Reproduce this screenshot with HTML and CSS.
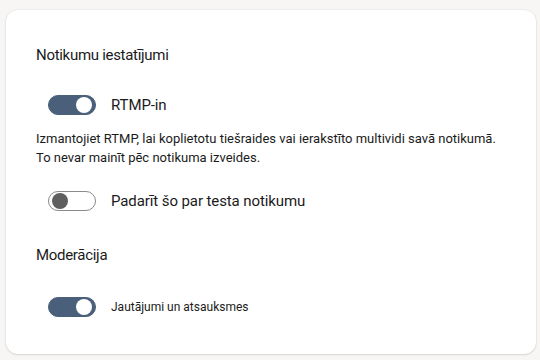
FILE: index.html
```html
<!DOCTYPE html>
<html lang="lv">
<head>
    <meta charset="UTF-8">
    <meta name="viewport" content="width=device-width, initial-scale=1.0">
    <title>Notikumu iestatījumi</title>
    <link rel="stylesheet" href="styles.css">
</head>
<body>
    <main class="card">
        <section class="group">
            <h2 class="group-title">Notikumu iestatījumi</h2>

            <label class="toggle-row">
                <span class="toggle on"><span class="knob"></span></span>
                <span class="toggle-label">RTMP-in</span>
            </label>
            <p class="hint">Izmantojiet RTMP, lai koplietotu tiešraides vai ierakstīto multividi savā notikumā.<br>To nevar mainīt pēc notikuma izveides.</p>

            <label class="toggle-row">
                <span class="toggle"><span class="knob"></span></span>
                <span class="toggle-label">Padarīt šo par testa notikumu</span>
            </label>
        </section>

        <section class="group">
            <h2 class="group-title">Moderācija</h2>

            <label class="toggle-row">
                <span class="toggle on"><span class="knob"></span></span>
                <span class="toggle-label small">Jautājumi un atsauksmes</span>
            </label>
        </section>
    </main>
</body>
</html>
```

FILE: styles.css
```css
body {
    margin: 0;
    padding: 10px 4px 6px 6px;
    background-color: #f7f6f5;
    font-family: Roboto, "Liberation Sans", Arial, sans-serif;
    color: #1b1b1b;
}

.card {
    height: 344px;
    box-sizing: border-box;
    background-color: #fff;
    border-radius: 12px;
    box-shadow: 0 0 2px rgba(0, 0, 0, 0.12), 0 1px 2px rgba(0, 0, 0, 0.1);
    padding: 35px 30px 0 30px;
}

.group-title {
    margin: 0;
    font-size: 15px;
    letter-spacing: -0.3px;
    font-weight: normal;
    line-height: 20px;
}

.group + .group {
    margin-top: 34px;
}

.toggle-row {
    display: flex;
    align-items: center;
    gap: 15px;
    height: 20px;
    margin: 30px 0 0 12px;
}

.group + .group .toggle-row {
    margin-top: 32px;
}

.toggle {
    width: 48px;
    height: 20px;
    box-sizing: border-box;
    border: 1px solid #8a8a8a;
    border-radius: 10px;
    display: flex;
    align-items: center;
    padding: 0 3px;
}

.toggle .knob {
    width: 16px;
    height: 16px;
    border-radius: 50%;
    background-color: #5f5f5f;
}

.toggle.on {
    background-color: #4a5f7a;
    border-color: #4a5f7a;
    justify-content: flex-end;
}

.toggle.on .knob {
    background-color: #fff;
}

.toggle-label {
    font-size: 15px;
    letter-spacing: -0.1px;
}

.toggle-label.small {
    font-size: 12px;
    letter-spacing: 0;
}

.hint {
    margin: 14px 0 0 0;
    font-size: 13px;
    line-height: 19px;
    white-space: nowrap;
}

.hint + .toggle-row {
    margin-top: 24px;
}
```
